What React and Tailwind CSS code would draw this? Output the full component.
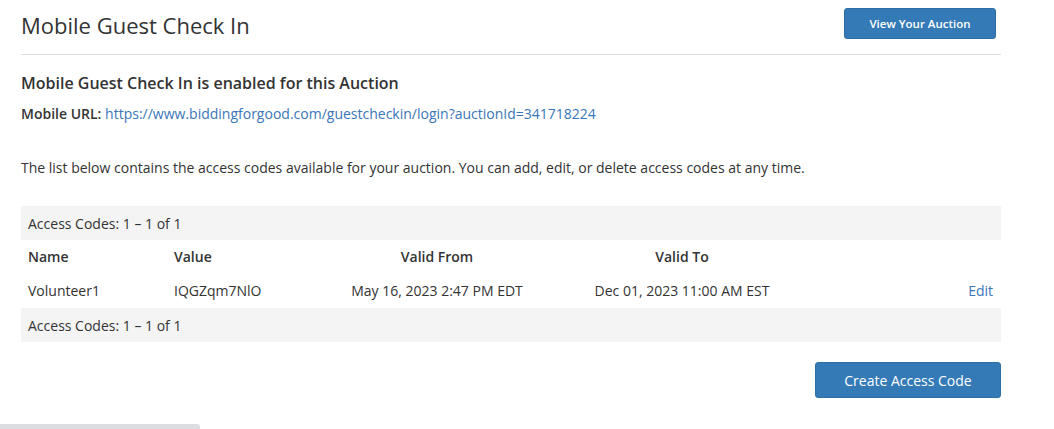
import React from 'react';

const codes = [
  {
    name: 'Volunteer1',
    value: 'IQGZqm7NlO',
    validFrom: 'May 16, 2023 2:47 PM EDT',
    validTo: 'Dec 01, 2023 11:00 AM EST',
  },
];

const cols = 'grid grid-cols-[146px_147px_246px_244px_1fr] items-center';

const App = () => {
  return (
    <div className="bg-white text-[#333] font-['Open_Sans',sans-serif] w-[1054px] h-[429px] overflow-hidden">
      <div className="w-[980px] ml-[21px]">
        {/* Header */}
        <div className="flex justify-between items-start pt-[8px] h-[55px] border-b border-[#dddddd]">
          <h1 className="text-[22px] leading-[32px] font-normal text-[#333] mt-[1px]">Mobile Guest Check In</h1>
          <button className="w-[152px] h-[31px] mr-[5px] bg-[#337ab7] border border-[#2e6da4] rounded-[3px] text-white text-[11.5px] font-semibold">
            View Your Auction
          </button>
        </div>

        <h2 className="text-[16px] font-semibold mt-[17px] leading-[22px]">
          Mobile Guest Check In is enabled for this Auction
        </h2>
        <p className="text-[14px] mt-[10px] leading-[20px]">
          <span className="font-semibold">Mobile URL:</span>{' '}
          <a href="#" className="text-[#3a76b8]">
            https://www.biddingforgood.com/guestcheckin/login?auctionId=341718224
          </a>
        </p>

        <p className="text-[14px] mt-[34px] leading-[20px]">
          The list below contains the access codes available for your auction. You can add, edit, or delete access codes at any time.
        </p>

        {/* Access codes table */}
        <div className="mt-[28px] text-[14px]">
          <div className="bg-[#f4f4f4] h-[34px] flex items-center px-[7px]">Access Codes: 1 – 1 of 1</div>
          <div className={`${cols} h-[33px] font-semibold`}>
            <div className="px-[7px]">Name</div>
            <div className="px-[7px]">Value</div>
            <div className="text-center">Valid From</div>
            <div className="text-center">Valid To</div>
            <div />
          </div>
          {codes.map((c) => (
            <div key={c.name} className={`${cols} h-[35px]`}>
              <div className="px-[7px]">{c.name}</div>
              <div className="px-[7px]">{c.value}</div>
              <div className="text-center">{c.validFrom}</div>
              <div className="text-center">{c.validTo}</div>
              <div className="text-right pr-[8px]">
                <a href="#" className="text-[#3a76b8]">Edit</a>
              </div>
            </div>
          ))}
          <div className="bg-[#f4f4f4] h-[34px] flex items-center px-[7px]">Access Codes: 1 – 1 of 1</div>
        </div>

        <div className="flex justify-end mt-[20px]">
          <button className="w-[186px] h-[36px] bg-[#337ab7] border border-[#2e6da4] rounded-[3px] text-white text-[14px]">
            Create Access Code
          </button>
        </div>
      </div>
      <div className="mt-[26px] w-[200px] h-[6px] bg-[#dcdde1] rounded-tr-[3px]" />
    </div>
  );
};

export default App;
